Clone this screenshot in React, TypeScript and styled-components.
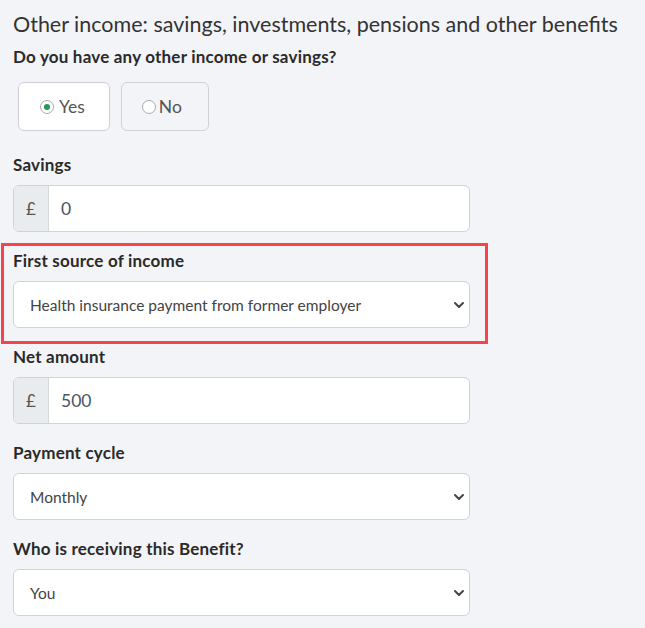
import React from 'react';
import styled, { createGlobalStyle } from 'styled-components';

const GlobalStyle = createGlobalStyle`
  body {
    margin: 0;
    background: #f3f4f8;
    font-family: 'Lato', 'Open Sans', sans-serif;
    color: #2b2b2b;
  }
`;

const Page = styled.div`
  padding: 10px 13px 20px;
  width: 457px;
`;

const Heading = styled.h2`
  margin: 0;
  font-size: 21.5px;
  line-height: 28px;
  font-weight: 400;
  color: #333;
  white-space: nowrap;
`;

const Label = styled.div`
  font-size: 17px;
  line-height: 24px;
  font-weight: 700;
  letter-spacing: 0.2px;
  color: #2a2a2a;
  margin-bottom: 8px;
  white-space: nowrap;
`;

const Question = styled(Label)`
  margin-top: 7px;
  margin-bottom: 0;
`;

const RadioRow = styled.div`
  display: flex;
  gap: 11px;
  margin: 13px 0 22px 5px;
`;

const RadioBox = styled.label<{ $checked?: boolean }>`
  display: flex;
  align-items: center;
  gap: ${(p) => (p.$checked ? '5px' : '3px')};
  height: 49px;
  box-sizing: border-box;
  padding: ${(p) => (p.$checked ? '0 24px 0 21px' : '0 26px 0 20px')};
  border: 1px solid #cfd1d5;
  border-radius: 6px;
  background: ${(p) => (p.$checked ? '#fff' : 'transparent')};
  font-size: 17.5px;
  color: #555;
`;

const RadioDot = styled.span<{ $checked?: boolean }>`
  width: 14px;
  height: 14px;
  box-sizing: border-box;
  border: 1px solid #a9abb0;
  border-radius: 50%;
  background: #fff;
  display: flex;
  align-items: center;
  justify-content: center;

  &::after {
    content: '';
    width: 6px;
    height: 6px;
    border-radius: 50%;
    background: ${(p) => (p.$checked ? '#1e9b55' : 'transparent')};
  }
`;

const Field = styled.div<{ $highlight?: boolean }>`
  position: relative;
  margin-bottom: 17px;

  ${(p) =>
    p.$highlight &&
    `
    &::before {
      content: '';
      position: absolute;
      top: -6px;
      bottom: -16px;
      left: -12px;
      right: -18px;
      border: 3px solid #f4444c;
      pointer-events: none;
    }
  `}
`;

const InputGroup = styled.div`
  display: flex;
  height: 47px;
  box-sizing: border-box;
  border: 1px solid #cfd2d7;
  border-radius: 6px;
  background: #fff;
  overflow: hidden;
`;

const Prefix = styled.span`
  width: 34px;
  display: flex;
  align-items: center;
  justify-content: center;
  background: #e9ecef;
  border-right: 1px solid #d6d9dd;
  color: #555;
  font-size: 17px;
`;

const Value = styled.span`
  display: flex;
  align-items: center;
  padding-left: 12px;
  font-size: 17.5px;
  color: #4a5563;
`;

const Select = styled.div`
  display: flex;
  align-items: center;
  justify-content: space-between;
  height: 47px;
  box-sizing: border-box;
  padding: 0 4px 0 16px;
  border: 1px solid #cfd2d7;
  border-radius: 6px;
  background: #fff;
  font-size: 15.5px;
  color: #444;
`;

const Chevron = () => (
  <svg width="12" height="12" viewBox="0 0 12 12">
    <path d="M2 4l4 4 4-4" fill="none" stroke="#444" strokeWidth="2" strokeLinecap="round" strokeLinejoin="round" />
  </svg>
);

const MoneyField = ({ label, value }: { label: string; value: string }) => (
  <Field>
    <Label>{label}</Label>
    <InputGroup>
      <Prefix>£</Prefix>
      <Value>{value}</Value>
    </InputGroup>
  </Field>
);

const SelectField = ({ label, value, highlight }: { label: string; value: string; highlight?: boolean }) => (
  <Field $highlight={highlight}>
    <Label>{label}</Label>
    <Select>
      <span>{value}</span>
      <Chevron />
    </Select>
  </Field>
);

export default function App() {
  return (
    <>
      <GlobalStyle />
      <Page>
        <Heading>Other income: savings, investments, pensions and other benefits</Heading>
        <Question>Do you have any other income or savings?</Question>
        <RadioRow>
          <RadioBox $checked>
            <RadioDot $checked />
            Yes
          </RadioBox>
          <RadioBox>
            <RadioDot />
            No
          </RadioBox>
        </RadioRow>
        <MoneyField label="Savings" value="0" />
        <SelectField label="First source of income" value="Health insurance payment from former employer" highlight />
        <MoneyField label="Net amount" value="500" />
        <SelectField label="Payment cycle" value="Monthly" />
        <SelectField label="Who is receiving this Benefit?" value="You" />
      </Page>
    </>
  );
}
